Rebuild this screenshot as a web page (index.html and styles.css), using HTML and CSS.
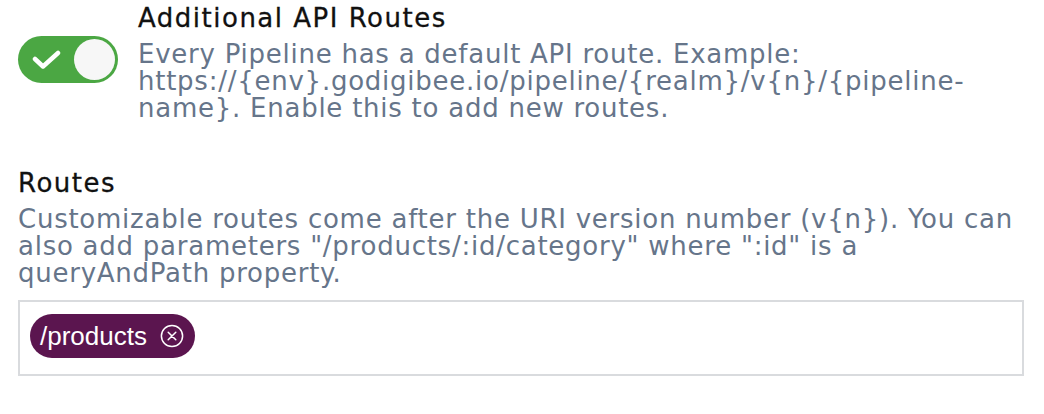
FILE: index.html
```html
<!DOCTYPE html>
<html>
<head>
<meta charset="utf-8">
<link rel="stylesheet" href="styles.css">
</head>
<body>
<div class="page">
  <div class="setting">
    <div class="toggle">
      <svg class="check" width="30" height="22" viewBox="0 0 30 22"><path d="M3 9 L11 16.5 L26 3" fill="none" stroke="#fff" stroke-width="4.5" stroke-linecap="round" stroke-linejoin="round"/></svg>
      <span class="knob"></span>
    </div>
    <div class="setting-text">
      <div class="title">Additional API Routes</div>
      <div class="desc">Every Pipeline has a default API route. Example: https://{env}.godigibee.io/pipeline/{realm}/v{n}/{pipeline-name}. Enable this to add new routes.</div>
    </div>
  </div>
  <div class="field">
    <div class="title">Routes</div>
    <div class="desc">Customizable routes come after the URI version number (v{n}). You can also add parameters "/products/:id/category" where ":id" is a queryAndPath property.</div>
    <div class="tags">
      <span class="chip">/products
        <svg class="close" width="24" height="24" viewBox="0 0 24 24"><circle cx="12" cy="12" r="10.6" fill="none" stroke="#fff" stroke-width="1.5"/><path d="M8.2 8.2 L15.8 15.8 M15.8 8.2 L8.2 15.8" stroke="#fff" stroke-width="1.5" stroke-linecap="round"/></svg>
      </span>
    </div>
  </div>
</div>
</body>
</html>
```
FILE: styles.css
```css
html, body {
  margin: 0;
  padding: 0;
  background: #fff;
}
.page {
  padding: 0 20px 0 18px;
  font-family: "DejaVu Sans", sans-serif;
}
.setting {
  display: flex;
  align-items: flex-start;
  gap: 20px;
}
.toggle {
  flex: none;
  width: 100px;
  height: 47px;
  margin-top: 36px;
  box-sizing: border-box;
  border-radius: 24px;
  background: #4ba743;
  display: flex;
  align-items: center;
  justify-content: space-between;
  padding: 0 3px 0 14px;
}
.check {
  display: block;
  margin-top: 2px;
}
.knob {
  width: 41px;
  height: 41px;
  border-radius: 50%;
  background: #f7f7f7;
}
.setting-text {
  flex: 1;
}
.title {
  font-size: 26px;
  line-height: 36px;
  color: #111;
  letter-spacing: 1.5px;
  -webkit-text-stroke: 0.3px #111;
}
.desc {
  margin-top: 5px;
  font-size: 26px;
  line-height: 27px;
  letter-spacing: 0.75px;
  color: #66758a;
}
.field {
  margin-top: 43px;
}
.tags {
  margin-top: 13px;
  border: 2px solid #d9dbde;
  padding: 12px 10px 16px;
  display: flex;
}
.chip {
  display: inline-flex;
  align-items: center;
  height: 44px;
  box-sizing: border-box;
  padding: 0 11px 0 10px;
  border-radius: 22px;
  background: #5b154f;
  color: #fff;
  font-family: "Liberation Sans", Arial, sans-serif;
  font-size: 26px;
  gap: 13px;
}
.close {
  display: block;
}
```
